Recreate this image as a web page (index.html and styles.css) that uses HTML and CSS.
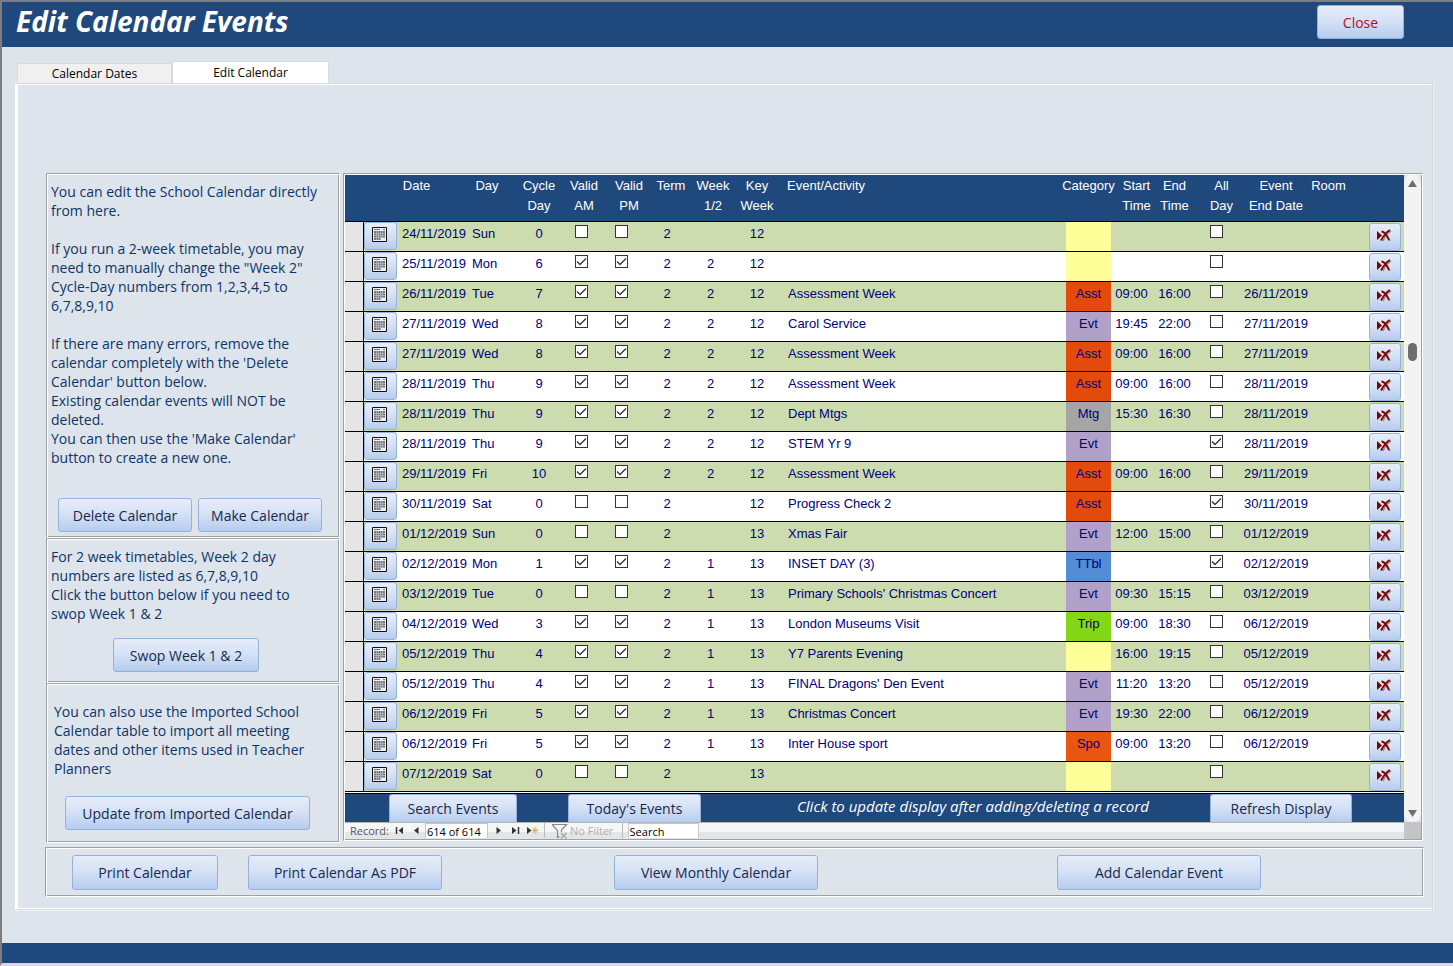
FILE: index.html
```html
<!DOCTYPE html>
<html lang="en">
<head>
<meta charset="utf-8">
<title>Edit Calendar Events</title>
<link rel="stylesheet" href="styles.css">
</head>
<body>
<svg class="defs" aria-hidden="true">
  <symbol id="calendar" viewBox="0 0 15 15">
    <path d="M.5.5h14v14H.5z" fill="#e9eef7" stroke="#111"/>
    <path d="M2 2.5h6M11 2.5h2" stroke="#777"/>
    <path d="M2 4h11v7H9v2H2z" fill="#777"/>
    <path d="M2 6.5h11M2 8.5h11M2 10.5h11M4.500 4v9M6.500 4v9M8.500 4v9M10.500 4v7" stroke="#c3c8d0" stroke-width=".6"/>
  </symbol>
  <symbol id="delete" viewBox="0 0 16 13">
    <path d="M15 2l-5 4-3 6M8 3l3 3 3 6" stroke="#8c8c8c" stroke-width="1.500" fill="none"/>
    <path d="M1 2v9l5-4.500z" fill="#800000"/>
    <path d="M14 1C10 3 8 6 5 11.500M5.500 2.500c4 .5 5 4 7.500 8.500" stroke="#800000" stroke-width="1.800" fill="none"/>
  </symbol>
</svg>
<div class="window">
  <header class="titlebar">
    <h1>Edit Calendar Events</h1>
    <button class="btn close">Close</button>
  </header>
  <main class="main">
    <div class="tabs" role="tablist">
      <button class="tab" role="tab">Calendar Dates</button>
      <button class="tab active" role="tab" aria-selected="true">Edit Calendar</button>
    </div>
    <div class="page">
      <div class="columns">
        <aside class="side">
          <section class="etched intro">
            <p>You can edit the School Calendar directly<br>from here.<br><br>If you run a 2-week timetable, you may<br>need to manually change the "Week 2"<br>Cycle-Day numbers from 1,2,3,4,5 to<br>6,7,8,9,10<br><br>If there are many errors, remove the<br>calendar completely with the 'Delete<br>Calendar' button below.<br>Existing calendar events will NOT be<br>deleted.<br>You can then use the 'Make Calendar'<br>button to create a new one.</p>
            <div class="pair"><button class="btn w134">Delete Calendar</button><button class="btn w124">Make Calendar</button></div>
          </section>
          <section class="etched swop">
            <p>For 2 week timetables, Week 2 day<br>numbers are listed as 6,7,8,9,10<br>Click the button below if you need to<br>swop Week 1 &amp; 2</p>
            <button class="btn w146">Swop Week 1 &amp; 2</button>
          </section>
          <section class="etched import">
            <p>You can also use the Imported School<br>Calendar table to import all meeting<br>dates and other items used in Teacher<br>Planners</p>
            <button class="btn w245">Update from Imported Calendar</button>
          </section>
        </aside>
        <section class="etched subform">
          <div class="sheet">
            <table class="grid">
              <colgroup>
                <col class="c19"><col class="c33"><col class="c73"><col class="c44"><col class="c50"><col class="c34"><col class="c46"><col class="c46"><col class="c41"><col class="c52"><col><col class="c45"><col class="c41"><col class="c45"><col class="c39"><col class="c80"><col class="c53"><col class="c35">
              </colgroup>
              <thead>
                <tr>
                  <th></th><th></th><th class="h-date">Date</th><th class="h-day">Day</th>
                  <th>Cycle<br>Day</th><th class="h-am"><span>Valid<br>AM</span></th><th class="h-pm"><span>Valid<br>PM</span></th>
                  <th class="h-term">Term</th><th class="h-week">Week<br>1/2</th><th>Key<br>Week</th>
                  <th class="h-event">Event/Activity</th><th><span>Category</span></th><th class="h-start">Start<br>Time</th>
                  <th>End<br>Time</th><th class="h-all">All<br>Day</th><th>Event<br>End Date</th><th class="h-room"><span>Room</span></th><th></th>
                </tr>
              </thead>
              <tbody id="rows"></tbody>
            </table>
            <div class="sliver"></div>
            <div class="formfoot">
              <button class="btn flat w128">Search Events</button>
              <button class="btn flat w133">Today's Events</button>
              <em>Click to update display after adding/deleting a record</em>
              <button class="btn flat refresh">Refresh Display</button>
            </div>
          </div>
          <div class="scroll">
            <svg width="9" height="7" viewBox="0 0 9 7"><path d="M4.500 0L9 7H0z" fill="#6e6e6e"/></svg>
            <div class="thumb"></div>
            <svg width="9" height="7" viewBox="0 0 9 7"><path d="M4.500 7L9 0H0z" fill="#6e6e6e"/></svg>
          </div>
          <nav class="recnav">
            <label for="rec">Record:</label>
            <button aria-label="First record"><svg width="9" height="9"><path d="M1.500 1v7" stroke="#333" stroke-width="1.500"/><path d="M8 1v7L3.500 4.500z" fill="#333"/></svg></button>
            <button aria-label="Previous record"><svg width="9" height="9"><path d="M6.500 1v7L2 4.500z" fill="#333"/></svg></button>
            <input id="rec" class="recno" value="614 of 614">
            <button aria-label="Next record"><svg width="9" height="9"><path d="M2.500 1v7L7 4.500z" fill="#333"/></svg></button>
            <button aria-label="Last record"><svg width="9" height="9"><path d="M7.500 1v7" stroke="#333" stroke-width="1.500"/><path d="M1 1v7l4.500-3.500z" fill="#333"/></svg></button>
            <button aria-label="New record"><svg width="13" height="9"><path d="M1 1v7l4.500-3.500z" fill="#333"/><path d="M9 1v7M5.800 4.500h6.500M6.800 2.200l4.500 4.600M11.300 2.200L6.800 6.800" stroke="#e0aa5c"/></svg></button>
            <span class="filter"><svg width="17" height="16" viewBox="0 0 17 16"><path d="M1 1.500h14.500L10.500 7v2M1 1.500l5.500 6v7l2-1" fill="none" stroke="#888" stroke-width="1.200"/><path d="M10 10l5.500 5.500M15.500 10L10 15.500" stroke="#aaa" stroke-width="1.500"/></svg>No Filter</span>
            <input class="search" aria-label="Search" value="Search">
          </nav>
          <div class="corner"></div>
        </section>
      </div>
      <div class="etched actions">
        <button class="btn w146">Print Calendar</button>
        <button class="btn w194">Print Calendar As PDF</button>
        <button class="btn w204 monthly">View Monthly Calendar</button>
        <button class="btn w204 add">Add Calendar Event</button>
      </div>
    </div>
  </main>
  <footer class="footer"></footer>
</div>
<script src="rows.js"></script>
</body>
</html>
```
FILE: rows.js
```js
// date, day, cycle day, valid am/pm, week 1/2, key week, event, category, start, end, all day, end date
const rows = [
  ["24/11/2019", "Sun", 0, 0, "", 12, "", "none", "", "", 0, ""],
  ["25/11/2019", "Mon", 6, 1, 2, 12, "", "none", "", "", 0, ""],
  ["26/11/2019", "Tue", 7, 1, 2, 12, "Assessment Week", "Asst", "09:00", "16:00", 0, "26/11/2019"],
  ["27/11/2019", "Wed", 8, 1, 2, 12, "Carol Service", "Evt", "19:45", "22:00", 0, "27/11/2019"],
  ["27/11/2019", "Wed", 8, 1, 2, 12, "Assessment Week", "Asst", "09:00", "16:00", 0, "27/11/2019"],
  ["28/11/2019", "Thu", 9, 1, 2, 12, "Assessment Week", "Asst", "09:00", "16:00", 0, "28/11/2019"],
  ["28/11/2019", "Thu", 9, 1, 2, 12, "Dept Mtgs", "Mtg", "15:30", "16:30", 0, "28/11/2019"],
  ["28/11/2019", "Thu", 9, 1, 2, 12, "STEM Yr 9", "Evt", "", "", 1, "28/11/2019"],
  ["29/11/2019", "Fri", 10, 1, 2, 12, "Assessment Week", "Asst", "09:00", "16:00", 0, "29/11/2019"],
  ["30/11/2019", "Sat", 0, 0, "", 12, "Progress Check 2", "Asst", "", "", 1, "30/11/2019"],
  ["01/12/2019", "Sun", 0, 0, "", 13, "Xmas Fair", "Evt", "12:00", "15:00", 0, "01/12/2019"],
  ["02/12/2019", "Mon", 1, 1, 1, 13, "INSET DAY (3)", "TTbl", "", "", 1, "02/12/2019"],
  ["03/12/2019", "Tue", 0, 0, 1, 13, "Primary Schools' Christmas Concert", "Evt", "09:30", "15:15", 0, "03/12/2019"],
  ["04/12/2019", "Wed", 3, 1, 1, 13, "London Museums Visit", "Trip", "09:00", "18:30", 0, "06/12/2019"],
  ["05/12/2019", "Thu", 4, 1, 1, 13, "Y7 Parents Evening", "none", "16:00", "19:15", 0, "05/12/2019"],
  ["05/12/2019", "Thu", 4, 1, 1, 13, "FINAL Dragons' Den Event", "Evt", "11:20", "13:20", 0, "05/12/2019"],
  ["06/12/2019", "Fri", 5, 1, 1, 13, "Christmas Concert", "Evt", "19:30", "22:00", 0, "06/12/2019"],
  ["06/12/2019", "Fri", 5, 1, 1, 13, "Inter House sport", "Spo", "09:00", "13:20", 0, "06/12/2019"],
  ["07/12/2019", "Sat", 0, 0, "", 13, "", "none", "", "", 0, ""]
];

const box = (on, label) =>
  `<td class="mid"><input type="checkbox" aria-label="${label}"${on ? " checked" : ""}></td>`;
const mid = value => `<td class="mid">${value}</td>`;

document.getElementById("rows").innerHTML = rows.map(r => `
  <tr>
    <td class="selector"></td>
    <td class="tool"><button class="btn icon" aria-label="Pick date"><svg width="15" height="15"><use href="#calendar"/></svg></button></td>
    <td class="date">${r[0]}</td><td class="day">${r[1]}</td>
    ${mid(r[2])}${box(r[3], "Valid AM")}${box(r[3], "Valid PM")}${mid(2)}${mid(r[4])}${mid(r[5])}
    <td class="event">${r[6]}</td>
    <td class="mid cat ${r[7]}">${r[7] === "none" ? "" : r[7]}</td>
    ${mid(r[8])}${mid(r[9])}${box(r[10], "All day")}${mid(r[11])}<td></td>
    <td class="tool"><button class="btn icon del" aria-label="Delete record"><svg width="16" height="13"><use href="#delete"/></svg></button></td>
  </tr>`).join("");
```
FILE: styles.css
```css
* { box-sizing: border-box; }
body { margin: 0; font: 14px/19px "Open Sans", Lato, sans-serif; color: #0d3468; background: #dde4ec; }
h1, p { margin: 0; }
button, input { font: inherit; color: inherit; margin: 0; }
.defs { position: absolute; width: 0; height: 0; }

.window { display: flex; flex-direction: column; min-height: 100vh; border-top: 2px solid #7d7d7d; border-left: 2px solid #7d7d7d; border-bottom: 3px solid #d9d9de; }
.titlebar { display: flex; justify-content: space-between; align-items: flex-start; height: 45px; padding: 3px 49px 0 14px; background: #1f497c; }
h1 { color: #fff; font-size: 28px; line-height: 32px; font-weight: 700; font-style: italic; }
.footer { height: 20px; background: #1f497c; }

.btn { height: 34px; padding: 0; border: 1px solid #95b3d9; border-radius: 3px; background: linear-gradient(#e6edfa, #d3e0f5 50%, #b6ccee); color: #17294a; white-space: nowrap; }
.close { width: 87px; color: #b40d1c; }
.w124 { width: 124px; } .w128 { width: 128px; } .w133 { width: 133px; } .w134 { width: 134px; }
.w146 { width: 146px; } .w194 { width: 194px; } .w204 { width: 204px; } .w245 { width: 245px; }

.main { flex: 1; padding: 14px 20px 33px 13px; display: flex; flex-direction: column; }
.tabs { display: flex; align-items: flex-end; padding-left: 2px; height: 22px; }
.tab { height: 20px; width: 155px; border: 1px solid #d9d9d9; border-bottom: 0; background: #f0f0f0; color: #000; font-size: 12px; line-height: 18px; padding: 0; }
.tab.active { width: 157px; height: 22px; background: #fff; }
.page { flex: 1; display: flex; flex-direction: column; gap: 4px; border: 1px solid #d6d8da; border-left: 3px solid #fff; box-shadow: inset 0 1px #fff, inset 0 -1px #fff, 1px 1px #f0f0f0; padding: 89px 8px 12px 27px; }

.etched { border: 1px solid #fff; border-top-color: #a0a0a0; border-left-color: #a0a0a0; box-shadow: inset 1px 1px #fff, inset -1px -1px #a0a0a0; }
.columns { display: flex; gap: 3px; padding: 0 1px; align-items: flex-start; }
.side { width: 294px; flex: none; }
.side p { white-space: nowrap; }
.intro { padding: 8px 4px 5px; }
.pair { display: flex; gap: 6px; padding: 31px 7px 0; }
.swop { padding: 8px 4px 10px; }
.swop .btn { display: block; margin: 15px 0 0 62px; }
.import { padding: 18px 7px 12px; }
.import .btn { display: block; margin: 18px 0 0 11px; }

.subform { flex: 1; min-width: 0; display: grid; grid-template-columns: 1fr 17px; padding: 1px; }
.sheet { min-width: 0; background: #fff; }
.grid { width: 100%; table-layout: fixed; border-collapse: collapse; font: 13px/24px "Liberation Sans", sans-serif; color: #00007d; }
.c19 { width: 19px; } .c33 { width: 33px; } .c34 { width: 34px; } .c35 { width: 35px; } .c39 { width: 39px; }
.c41 { width: 41px; } .c44 { width: 44px; } .c45 { width: 45px; } .c46 { width: 46px; } .c50 { width: 50px; }
.c52 { width: 52px; } .c53 { width: 53px; } .c73 { width: 73px; } .c80 { width: 80px; }
th, td { padding: 0; vertical-align: top; white-space: nowrap; }
thead tr { height: 46px; background: #1f497c; border-bottom: 1px solid #000; }
th { padding-top: 1px; line-height: 20px; font-weight: 400; color: #fff; }
th span { display: inline-block; margin: 0 -10px; }
.h-date { padding-right: 34px; }
.h-day { padding-right: 10px; }
.h-am { padding-left: 6px; }
.h-pm { padding-left: 16px; }
.h-term { padding-left: 8px; }
.h-week { padding-left: 5px; }
.h-event { text-align: left; padding-left: 4px; }
.h-start { padding-left: 10px; }
.h-all { padding-left: 10px; }
.h-room { padding-right: 28px; }
tbody tr { height: 30px; background: #fff; border-bottom: 1px solid #000; }
tbody tr:nth-child(odd) { background: #ccdcae; }
.selector { background: #e5e5e5; box-shadow: inset -1px 0 #000; }
.tool { line-height: 0; }
.date { padding-left: 5px; }
.day { padding-left: 2px; }
.mid { text-align: center; }
.event { padding-left: 5px; overflow: hidden; }
.icon { width: 33px; height: 28px; padding: 0 2px 2px 0; display: flex; align-items: center; justify-content: center; }
.icon.del { width: 32px; margin-top: 1px; padding: 0 2px 2px 0; }
.none { background: #ffff99; } .Asst { background: #e24b0b; } .Evt { background: #b1a0c7; } .Mtg { background: #a5a5a5; }
.TTbl { background: #538dd5; } .Trip { background: #84d715; } .Spo { background: #e8560f; }
input[type=checkbox] { appearance: none; display: block; width: 13px; height: 13px; margin: 3px auto 0; border: 1px solid #333; background: #fff; }
input[type=checkbox]:checked { background: #fff url("data:image/svg+xml,%3Csvg xmlns='http://www.w3.org/2000/svg' width='11' height='11'%3E%3Cpath d='M1 5.500l3 3L10 2.500' fill='none' stroke='%23333' stroke-width='1.300'/%3E%3C/svg%3E"); }

.sliver { height: 2px; border-bottom: 1px solid #000; }
.formfoot { display: flex; height: 28px; padding: 0 52px 0 44px; background: #1f497c; color: #fff; }
.flat { height: 28px; border-bottom: 0; border-radius: 3px 3px 0 0; padding-top: 1px; }
.formfoot .w133 { margin-left: 51px; }
.formfoot em { margin-left: 96px; font-size: 15px; line-height: 24px; white-space: nowrap; }
.refresh { width: 142px; margin-left: auto; }
.scroll { background: #f3f3f3; display: flex; flex-direction: column; align-items: center; padding: 5px 0; border-radius: 8px; }
.thumb { width: 9px; height: 18px; border-radius: 5px; background: #6e6e6e; margin: 156px 0 auto; }
.recnav { display: flex; align-items: center; height: 17px; padding-left: 5px; border-top: 1px solid #b5b5b5; background: linear-gradient(#f5f6f8 55%, #e4e5e8 55%); font: 11px/15px "Open Sans", sans-serif; color: #555; }
.recnav label { margin-right: 2px; }
.recnav button { border: 0; padding: 0; background: none; width: 17px; height: 15px; display: flex; align-items: center; justify-content: center; }
.recnav input { height: 15px; border: 1px solid #c8c8c8; border-bottom: 0; background: #fff; color: #000; padding: 0 1px; }
.recno { width: 63px; margin-right: 2px; }
.filter { display: flex; align-items: center; gap: 2px; height: 15px; margin-left: 3px; padding: 0 8px 0 6px; border: 1px solid #bbb; border-width: 0 1px; color: #b0b0b0; white-space: nowrap; }
.search { width: 71px; margin-left: 5px; }
.corner { background: #c3c4c8; }

.actions { display: flex; min-height: 49px; padding: 7px 26px 6px; }
.actions .btn { height: 35px; }
.actions .w194 { margin-left: 30px; }
.actions .monthly { margin-left: 172px; }
.actions .add { margin-left: auto; margin-right: 136px; }
```
